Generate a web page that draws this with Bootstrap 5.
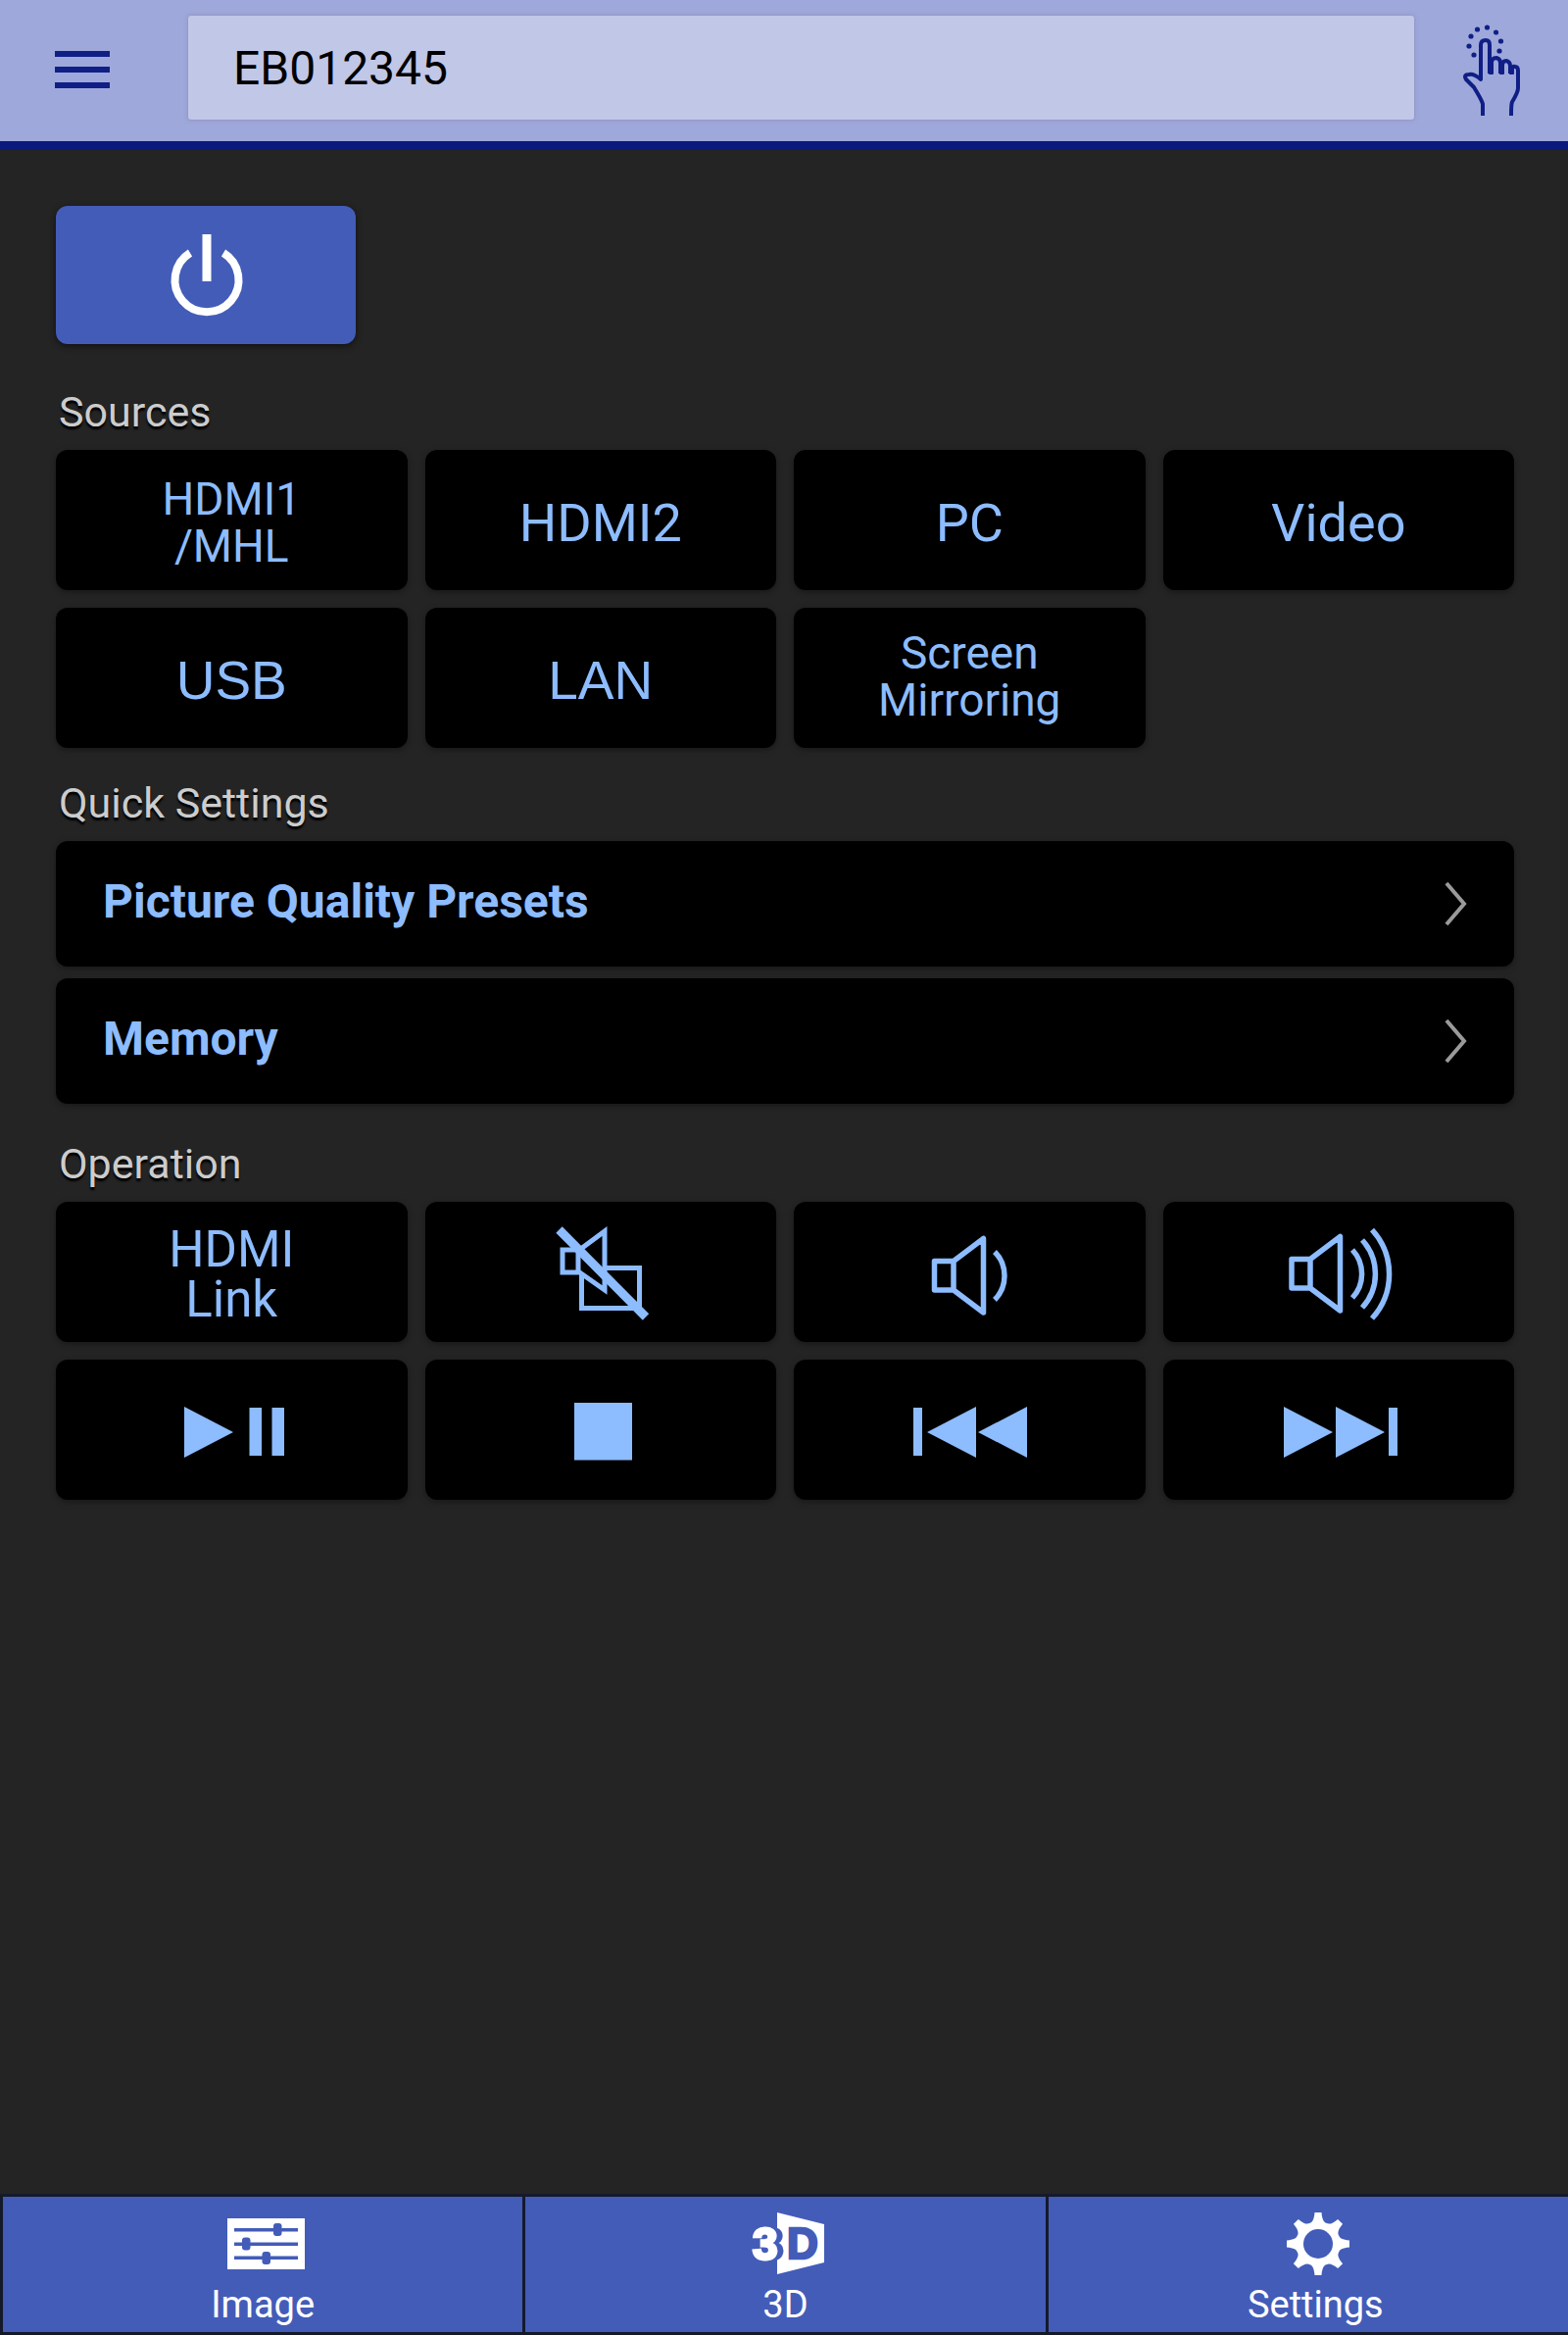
<!DOCTYPE html>
<html lang="en">
<head>
<meta charset="utf-8">
<meta name="viewport" content="width=device-width, initial-scale=1">
<title>Projector remote</title>
<link href="https://cdn.jsdelivr.net/npm/bootstrap@5.3.0/dist/css/bootstrap.min.css" rel="stylesheet">
<style>
:root { --navy: #0f1f86; --indigo: #435cb8; --sky: #8dbcff; }
body { font-family: Roboto, "Liberation Sans", sans-serif; background: #242424; color: #ccc; }
svg { display: block; overflow: visible; }
.topbar { background: #9fa8da; border-bottom: 9px solid #0b1a7d; padding: 16px 48px 22px 56px; }
.device { height: 106px; margin: 0 49px 0 80px; padding: 0 46px; font-size: 48px; color: #000; background: #c1c7e7; border: 0; border-radius: 3px; box-shadow: 0 0 4px rgba(120,110,150,.5); }
.device:focus { background: #c1c7e7; color: #000; }
.panel { padding: 57px 55px 57px 57px; }
.power { width: 306px; height: 141px; background: var(--indigo); border-radius: 12px; box-shadow: 0 2px 6px #111; }
.section-title { font-size: 43px; line-height: 54px; font-weight: 400; margin: 29px 0 12px 3px; color: #ccc; text-shadow: 0 3px 2px #000; }
.power + .section-title { margin-top: 42px; }
.preset-list + .section-title { margin-top: 34px; }
.keys { --bs-gutter-x: 18px; --bs-gutter-y: 18px; }
.key { height: 143px; padding: 6px 0 0; background: #000; color: var(--sky); border-radius: 12px; font-size: 54px; line-height: 54px; box-shadow: 0 2px 6px rgba(0,0,0,.35); }
.key-two { font-size: 46px; line-height: 48px; padding-top: 4px; }
.key-link { font-size: 51px; line-height: 51px; padding-top: 4px; }
.key-wide { font-family: "Liberation Sans", Arial, sans-serif; font-size: 55px; padding-top: 4px; }
.preset-list { gap: 12px; }
.preset { height: 128px; padding: 0 48px 4px 48px; background: #000; color: var(--sky); border-radius: 12px; font-size: 48px; font-weight: 700; box-shadow: 0 2px 6px rgba(0,0,0,.35); }
.key:hover, .key:active, .preset:hover, .preset:active { background: #111 !important; color: var(--sky) !important; }
.power:hover { background: #3a51a8; }
.tabbar { display: grid; grid-template-columns: repeat(3, 1fr); background: #151a2b; gap: 3px; padding: 3px 0 3px 3px; }
.tab { background: var(--indigo); color: #fff; text-decoration: none; font-size: 38px; line-height: 44px; padding: 16px 0 6px; gap: 8px; }
.tab:last-child { padding-left: 15px; }
.logo-front { filter: drop-shadow(6px 0 0 #435cb8); }
</style>
</head>
<body class="d-flex flex-column min-vh-100">

<header class="topbar d-flex align-items-center">
  <button type="button" class="btn p-0 border-0 mt-1" aria-label="Menu">
    <svg width="56" height="38" viewBox="0 0 56 38" fill="#0f1f86"><path d="M0 0h56v6H0zM0 16h56v6H0zM0 32h56v6H0z"/></svg>
  </button>
  <input class="device form-control flex-fill w-auto" type="text" value="EB012345" aria-label="Projector name">
  <button type="button" class="btn p-0 border-0 mt-1" aria-label="Touch control">
    <svg width="60" height="90" viewBox="0 2 60 90" fill="none" stroke="#0f1f86" stroke-width="4" stroke-linejoin="round">
      <path d="M21 94V82Q20 78 12 65L4 57Q1 52 7 52Q12 51 19 57V22Q19 17 24 17Q28 17 28 22V51M30 51V39Q31 35 35 35Q39 36 39 40V51M41 51V43Q41 38 45 38Q49 39 49 43V51M51 51V47Q51 43 54 44Q57 44 57 48V66Q57 70 51 80Q50 82 50 94"/>
      <path d="M28 37V51H31V37M39 40V51H42V40M49 43V51H52V44" fill="#0f1f86" stroke-width="2"/>
      <g fill="#0f1f86" stroke="none"><circle cx="12" cy="32" r="2.6"/><circle cx="7" cy="23" r="2.6"/><circle cx="9" cy="13" r="2.6"/><circle cx="15.500" cy="6" r="2.6"/><circle cx="25.500" cy="4" r="2.6"/><circle cx="34.500" cy="9" r="2.6"/><circle cx="39.500" cy="18" r="2.6"/><circle cx="38" cy="28" r="2.6"/></g>
    </svg>
  </button>
</header>

<main class="panel flex-grow-1">
  <button type="button" class="power btn border-0 p-0 d-flex align-items-center justify-content-center" aria-label="Power">
    <svg width="74" height="84" viewBox="0 0 74 84" fill="none" stroke="#fff" stroke-width="8"><path d="M38 0V48" stroke-width="9"/><path d="M21 19A32.500 32.500 0 1 0 55 19"/></svg>
  </button>

  <h2 class="section-title">Sources</h2>
  <div class="row row-cols-4 keys">
    <div class="col"><button type="button" class="btn border-0 w-100 key key-two">HDMI1<br>/MHL</button></div>
    <div class="col"><button type="button" class="btn border-0 w-100 key">HDMI2</button></div>
    <div class="col"><button type="button" class="btn border-0 w-100 key">PC</button></div>
    <div class="col"><button type="button" class="btn border-0 w-100 key">Video</button></div>
    <div class="col"><button type="button" class="btn border-0 w-100 key key-wide">USB</button></div>
    <div class="col"><button type="button" class="btn border-0 w-100 key key-wide">LAN</button></div>
    <div class="col"><button type="button" class="btn border-0 w-100 key key-two pt-0 pb-1">Screen<br>Mirroring</button></div>
  </div>

  <h2 class="section-title">Quick Settings</h2>
  <div class="preset-list d-flex flex-column">
    <button type="button" class="preset btn border-0 d-flex align-items-center justify-content-between">Picture Quality Presets
      <svg class="mt-1" width="24" height="44" viewBox="0 0 24 44" fill="none" stroke="#9a9a9a" stroke-width="4"><path d="M3 1L21 22L3 43"/></svg></button>
    <button type="button" class="preset btn border-0 d-flex align-items-center justify-content-between">Memory
      <svg class="mt-1" width="24" height="44" viewBox="0 0 24 44" fill="none" stroke="#9a9a9a" stroke-width="4"><path d="M3 1L21 22L3 43"/></svg></button>
  </div>

  <h2 class="section-title">Operation</h2>
  <div class="row row-cols-4 keys">
    <div class="col"><button type="button" class="btn border-0 w-100 key key-link">HDMI<br>Link</button></div>
    <div class="col"><button type="button" class="btn border-0 w-100 key d-flex align-items-center justify-content-center pt-0" aria-label="Mute audio and video">
      <svg width="120" height="100" viewBox="-1 0 120 100" fill="none" stroke="#8dbcff" stroke-width="5"><path d="M36 27H20V50H36ZM36 28L63 8V68L36 49M63 45.500H98.500V86.500H39.500V52"/><path d="M16.500 6.500L105 95.500" stroke-width="9"/></svg></button></div>
    <div class="col"><button type="button" class="btn border-0 w-100 key d-flex align-items-center justify-content-center pt-0" aria-label="Volume down">
      <svg width="120" height="100" viewBox="0 0 120 100" fill="none" stroke="#8dbcff" stroke-width="5.500" stroke-linejoin="round"><path d="M44 38.500H24.500V68H44ZM44 38.500L74.500 15.500V91L44 68"/><path d="M86 29A35 35 0 0 1 86 78"/></svg></button></div>
    <div class="col"><button type="button" class="btn border-0 w-100 key d-flex align-items-center justify-content-center pt-0" aria-label="Volume up">
      <svg width="120" height="100" viewBox="0 0 120 100" fill="none" stroke="#8dbcff" stroke-width="5.500" stroke-linejoin="round"><path d="M31 36.500H12V66H31ZM31 36.500L61.500 13.500V89L31 66"/><path d="M74 27A36 36 0 0 1 74 76M84 17A51 51 0 0 1 84 86M94 6.500A67 67 0 0 1 94 97"/></svg></button></div>
    <div class="col"><button type="button" class="btn border-0 w-100 key d-flex align-items-center justify-content-center pt-0" aria-label="Play or pause">
      <svg width="120" height="100" viewBox="0 0 120 100" fill="#8dbcff"><path d="M12 26L62 52L12 78ZM78.500 27H91V76H78.500ZM101.500 27H114V76H101.500Z"/></svg></button></div>
    <div class="col"><button type="button" class="btn border-0 w-100 key d-flex align-items-center justify-content-center pt-0" aria-label="Stop">
      <svg width="120" height="100" viewBox="-1 0 120 100" fill="#8dbcff"><path d="M32 22H91V80.500H32Z"/></svg></button></div>
    <div class="col"><button type="button" class="btn border-0 w-100 key d-flex align-items-center justify-content-center pt-0" aria-label="Previous">
      <svg width="120" height="100" viewBox="0 0 120 100" fill="#8dbcff"><path d="M3 27H12V76H3ZM67 26V78L17 52ZM119 26V78L69 52Z"/></svg></button></div>
    <div class="col"><button type="button" class="btn border-0 w-100 key d-flex align-items-center justify-content-center pt-0" aria-label="Next">
      <svg width="120" height="100" viewBox="0 0 120 100" fill="#8dbcff"><path d="M4 26V78L54 52ZM57 26V78L107 52ZM111 27H120V76H111Z"/></svg></button></div>
  </div>
</main>

<nav class="tabbar" aria-label="Pages">
  <a href="#image" class="tab d-flex flex-column align-items-center">
    <svg width="80" height="64" viewBox="0 0 80 64"><path d="M4 6H83V58H4Z" fill="#fff"/><g fill="#435cb8"><path d="M11 16H76V19.500H11ZM11 30.500H76V34H11ZM11 44.500H76V48H11Z"/><rect x="51" y="11" width="8.500" height="13" rx="3"/><rect x="19" y="25.500" width="8.500" height="13" rx="3"/><rect x="39.500" y="40" width="8.500" height="13" rx="3"/></g></svg>
    Image</a>
  <a href="#three-d" class="tab d-flex flex-column align-items-center">
    <svg width="80" height="64" viewBox="0 0 80 64" font-family="Liberation Sans, Arial, sans-serif" font-weight="700"><path d="M32 0L80 12V51L32 63Z" fill="#fff"/><text x="42" y="47" font-size="44" fill="#435cb8" stroke="#435cb8" stroke-width="2.500">D</text><text class="logo-front" x="7" y="48" font-size="46" fill="#fff" stroke="#fff" stroke-width="3">3</text></svg>
    3D</a>
  <a href="#settings" class="tab d-flex flex-column align-items-center">
    <svg width="80" height="64" viewBox="0 0 80 64"><defs><path id="tooth" d="M-3.500 -32H3.500C4 -25 6 -21.500 9 -21L0 0L-9 -21C-6 -21.500 -4 -25 -3.500 -32Z"/></defs><g transform="translate(43 32)" fill="#fff"><circle r="21"/><use href="#tooth"/><use href="#tooth" transform="rotate(45)"/><use href="#tooth" transform="rotate(90)"/><use href="#tooth" transform="rotate(135)"/><use href="#tooth" transform="rotate(180)"/><use href="#tooth" transform="rotate(225)"/><use href="#tooth" transform="rotate(270)"/><use href="#tooth" transform="rotate(315)"/><circle r="15" fill="#435cb8"/></g></svg>
    Settings</a>
</nav>

<script src="https://cdn.jsdelivr.net/npm/bootstrap@5.3.0/dist/js/bootstrap.bundle.min.js"></script>
</body>
</html>
